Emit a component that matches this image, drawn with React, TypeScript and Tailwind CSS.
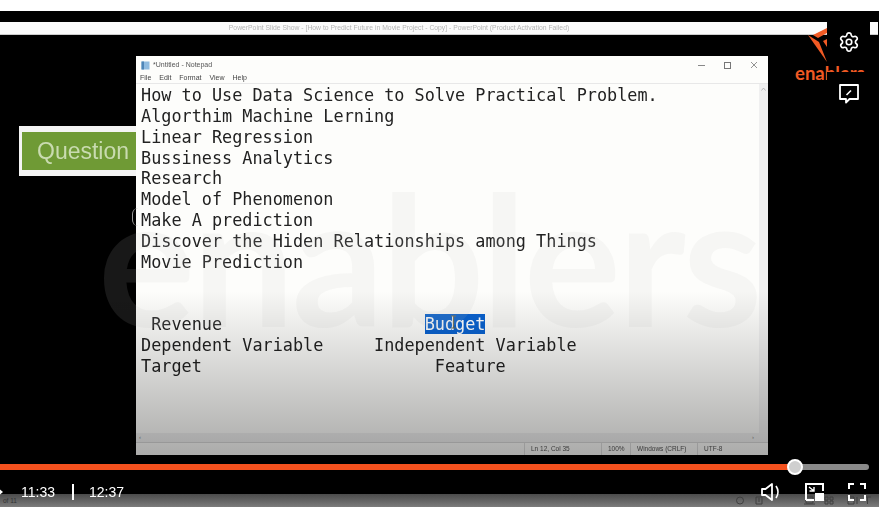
import { Settings } from 'lucide-react'

const lines = [
  'How to Use Data Science to Solve Practical Problem.',
  'Algorthim Machine Lerning',
  'Linear Regression',
  'Bussiness Analytics',
  'Research',
  'Model of Phenomenon',
  'Make A prediction',
  'Discover the Hiden Relationships among Things',
  'Movie Prediction',
  ' ',
  ' ',
]

function Notepad() {
  return (
    <div className="flex h-[399px] w-[632px] flex-col bg-[#fdfdfb] text-[#555]">
      {/* title bar */}
      <div className="flex h-[17px] items-center pt-[1px] pl-[5px] text-[7px] blur-[0.3px]">
        <svg width="9" height="9" viewBox="0 0 9 9" className="mr-[3px]">
          <rect x="0.500" y="0.500" width="8" height="8" fill="#8fbbe0" />
          <rect x="0.500" y="0.500" width="2.500" height="8" fill="#4f86b8" />
        </svg>
        <span>*Untitled - Notepad</span>
        <div className="ml-auto flex items-center gap-[19px] pr-[10px] text-[#777]">
          <div className="h-px w-[7px] bg-[#888]" />
          <div className="h-[7px] w-[7px] border border-[#777]" />
          <svg width="8" height="8" viewBox="0 0 8 8" stroke="#777" strokeWidth="0.8">
            <path d="M1 1 7 7M7 1 1 7" />
          </svg>
        </div>
      </div>
      {/* menu */}
      <div className="flex h-[11px] items-center gap-[8px] border-b border-[#e8e8e8] pl-[4px] text-[7px] text-[#444] blur-[0.3px]">
        <span>File</span>
        <span>Edit</span>
        <span>Format</span>
        <span>View</span>
        <span>Help</span>
      </div>
      <div className="flex min-h-0 flex-1">
        <div className="flex-1 pt-[1px] pl-[5px] font-['DejaVu_Sans_Mono',monospace] text-[16.83px] leading-[20.85px] whitespace-pre text-[#222] blur-[0.3px]">
          {lines.map((l, i) => (
            <div key={i}>{l}</div>
          ))}
          <div>
            {' Revenue' + ' '.repeat(20)}
            <span className="relative bg-[#0a62cf] text-white">
              Budget
              <svg width="7" height="14" viewBox="0 0 7 14" className="absolute top-[1px] left-[25px]" fill="none" stroke="#6f6f58" strokeWidth="1.200">
                <path d="M1 1h5M3.500 1v12M1 13h5" />
              </svg>
            </span>
          </div>
          <div>{'Dependent Variable' + ' '.repeat(5) + 'Independent Variable'}</div>
          <div>{'Target' + ' '.repeat(23) + 'Feature'}</div>
        </div>
        <div className="flex w-[9px] flex-col items-center bg-[#f0f0f0] pt-[3px]">
          <svg width="5" height="4" viewBox="0 0 5 4" fill="none" stroke="#aaa" strokeWidth="0.8">
            <path d="M0.500 3.500 2.500 1l2 2.500" />
          </svg>
        </div>
      </div>
      <div className="flex h-[10px] items-center justify-between border-b border-[#d8d8d8] bg-[#f0f0f0] px-[3px] pr-[14px] text-[6px] text-[#888]">
        <span>‹</span>
        <span>›</span>
      </div>
      <div className="flex h-[12px] items-center text-[6.5px] text-[#555] blur-[0.3px]">
        <div className="ml-[388px] h-full w-[77px] border-l border-[#ddd] pl-[6px] leading-[12px]">Ln 12, Col 35</div>
        <div className="h-full w-[29px] border-l border-[#ddd] pl-[6px] leading-[12px]">100%</div>
        <div className="h-full w-[67px] border-l border-[#ddd] pl-[6px] leading-[12px]">Windows (CRLF)</div>
        <div className="h-full flex-1 border-l border-[#ddd] pl-[6px] leading-[12px]">UTF-8</div>
      </div>
    </div>
  )
}

function Controls() {
  return (
    <div className="absolute inset-x-0 bottom-0 flex h-[43px] flex-col text-white">
      {/* progress */}
      <div className="relative mr-[10px] h-[6px] rounded-r-full bg-[#8a8a8a]">
        <div className="h-full w-[795px] bg-[#f4511e]" />
        <div className="absolute top-[-5px] left-[787px] h-4 w-4 rounded-full border-2 border-white bg-[#cfcfcf]" />
      </div>
      <div className="mt-[10px] flex h-[24px] items-center pr-[13px] font-['Liberation_Sans',sans-serif] text-[14px]">
        <div className="ml-[-2px] h-0 w-0 border-y-[4px] border-l-[5px] border-y-transparent border-l-white" />
        <span className="ml-[18px] w-[51px] blur-[0.3px]">11:33</span>
        <div className="h-[16px] w-[2px] bg-white" />
        <span className="ml-[15px] blur-[0.3px]">12:37</span>
        <div className="ml-auto flex items-center gap-[24px]">
          <svg width="20" height="20" viewBox="0 0 20 20" fill="none" stroke="white" strokeWidth="1.800">
            <path d="M1 7h3.500L11 2v16l-6.500-5H1z" strokeLinejoin="round" />
            <path d="M15 4c2.500 3.500 2.500 8.500 0 12" />
          </svg>
          <svg width="19" height="18" viewBox="0 0 19 18" fill="none">
            <path d="M1 17V1h17v7M1 17h8" stroke="white" strokeWidth="2" />
            <rect x="10" y="10" width="9" height="8" fill="white" />
            <path d="M4 4l5 4M4.500 8H9V4" stroke="white" strokeWidth="1.400" />
          </svg>
          <svg width="18" height="18" viewBox="0 0 18 18" fill="none" stroke="white" strokeWidth="2">
            <path d="M1 6V1h5M12 1h5v5M17 12v5h-5M6 17H1v-5" />
          </svg>
        </div>
      </div>
    </div>
  )
}

export default function App() {
  return (
    <div className="flex h-[507px] w-[882px] flex-col overflow-hidden bg-white font-['Liberation_Sans',sans-serif]">
      <div className="h-[11px] shrink-0" />
      <div className="relative mr-[3px] flex flex-1 flex-col overflow-hidden bg-black">
        {/* powerpoint title strip */}
        <div className="mt-[11px] mr-px flex h-[13px] items-center justify-center border-b border-[#ccc] bg-[#fbfbfb] pr-[80px] text-[6.8px] text-[#b4b4b4] blur-[0.3px]">
          PowerPoint Slide Show - [How to Predict Future in Movie Project - Copy] - PowerPoint (Product Activation Failed)
        </div>

        <div className="mt-[21px] flex items-start pl-[19px]">
          <div className="mt-[70px] flex h-[50px] w-[117px] shrink-0 items-center bg-[#f4f4f4] pl-[3px]">
            <div className="flex h-[38px] flex-1 items-center bg-[#6f9a35] pl-[15px] text-[23px] text-[#c9dbb0] blur-[0.3px]">
              Question
            </div>
          </div>
          <Notepad />
        </div>

        {/* slide status bar */}
        <div className="mt-auto flex h-[13px] items-center bg-gradient-to-b from-[#4c4c4c] to-[#7c7c7c] pr-[4px] pl-[3px] text-[6.5px] text-[#333]">
          of 11
          <svg width="140" height="11" viewBox="0 0 140 11" className="ml-auto" fill="none" stroke="#3f3f3f" strokeWidth="1">
            <circle cx="5" cy="5.500" r="3.500" />
            <path d="M21 2h6v7h-6zM23 4h2M23 6h2" />
            <path d="M71 2h7v6h-7zM69 9h11M90 2h3v3h-3zM95 2h3v3h-3zM90 6h3v3h-3zM95 6h3v3h-3z" />
            <path d="M113 2h6v7h-6zM122 2v7M129 2h7M132.500 2v7" />
          </svg>
        </div>

        {/* edge of a shape behind the notepad */}
        <div className="absolute top-[197px] left-[132px] h-[18px] w-[6px] rounded-l-full border-l border-[#999]" />

        {/* big watermark */}
        <div className="pointer-events-none absolute top-[136px] left-[98px] font-['Lato',sans-serif] text-[182px] leading-[220px] font-bold tracking-[-3px] text-[#c4c4c4]/[0.12]">
          enablers
        </div>

        <div className="pointer-events-none absolute inset-x-0 top-[280px] bottom-[13px] bg-gradient-to-b from-black/0 to-black/40" />

        {/* logo */}
        <div className="absolute top-[17px] left-[795px] w-[70px]">
          <svg width="34" height="38" viewBox="0 0 34 38" className="ml-[11px]" fill="#f15a24">
            <path d="M2 7 21 34 13 14z" />
            <path d="M7 7 21 0 21 5 12 10z" />
            <path d="M17 13l4-2v8z" />
          </svg>
          <div className="mt-[-4px] font-['Lato',sans-serif] text-[18.5px] leading-[22px] font-bold text-[#f15a24]">enablers</div>
        </div>

        {/* side buttons */}
        <div className="absolute top-[11px] left-[827px] flex w-[43px] flex-col gap-[7px]">
          <div className="flex h-[43px] items-center justify-center bg-black pb-[3px] text-white">
            <Settings size={22} strokeWidth={1.8} />
          </div>
          <div className="flex h-[44px] items-center justify-center bg-black">
            <svg width="22" height="22" viewBox="0 0 22 22" fill="none" stroke="white" strokeWidth="1.800">
              <path d="M2 2h18v14H11.500l-3.500 3.500V16H2z" strokeLinejoin="round" />
              <path d="M8.500 12 13 7.500" strokeWidth="1.600" />
            </svg>
          </div>
        </div>

        <Controls />
      </div>
    </div>
  )
}
